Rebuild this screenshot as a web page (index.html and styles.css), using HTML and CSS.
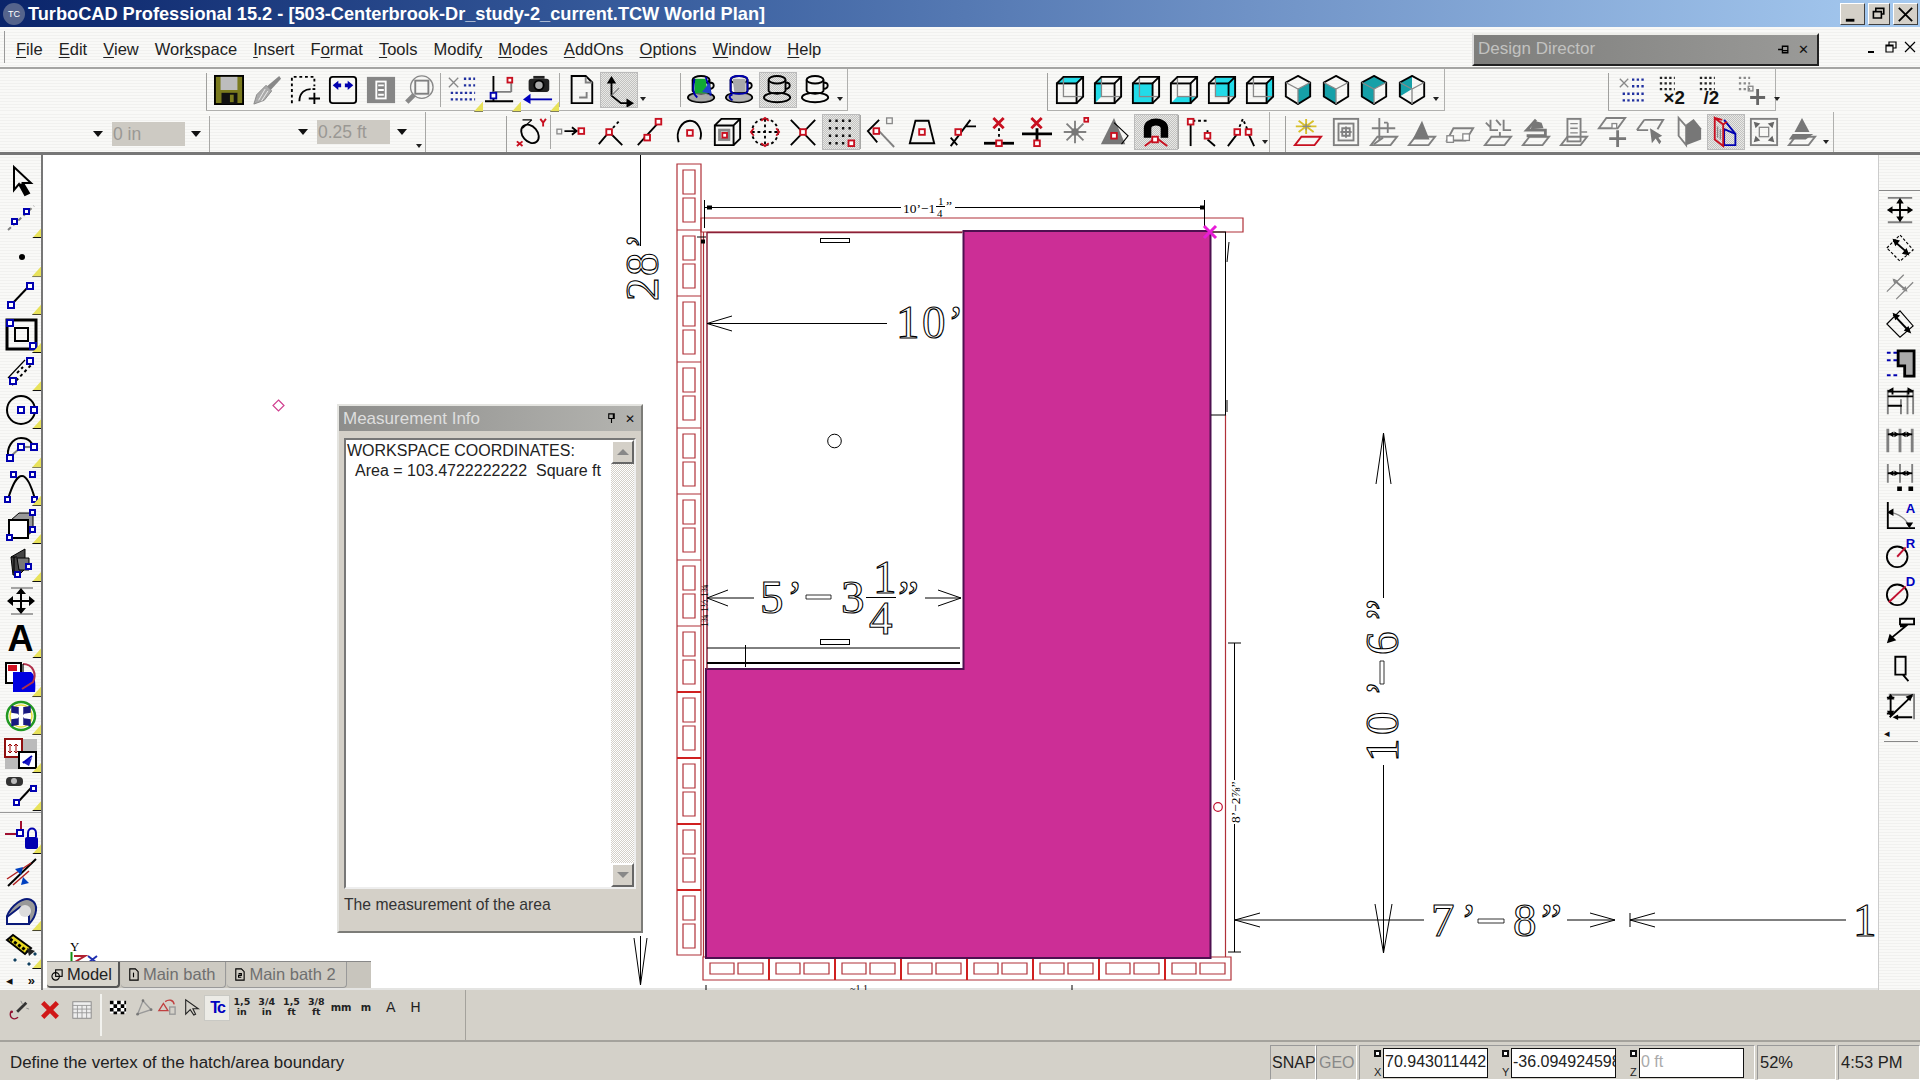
FILE: index.html
```html
<!DOCTYPE html>
<html lang="en">
<head>
<meta charset="utf-8">
<title>TurboCAD Professional 15.2</title>
<link rel="stylesheet" href="styles.css">
</head>
<body>
<svg class="defs" xmlns="http://www.w3.org/2000/svg">
  <symbol id="cube" viewBox="0 0 32 32"><rect class="k" x="2" y="9" width="21" height="21"/><rect class="g1" x="9" y="2" width="21" height="21"/><path class="k" d="M2 9 9 2H30V23L23 30M23 9 30 2"/></symbol>
  <symbol id="iso" viewBox="0 0 32 32"><path class="k" d="M16 1 29 8V23L16 31 3 23V8Z"/><path class="g1" d="M3 8 16 15 29 8M16 15V31"/></symbol>
  <symbol id="plane" viewBox="0 0 32 32"><path class="g" d="M9 21H30L23 30H2Z"/></symbol>
  <symbol id="cup" viewBox="0 0 32 32"><ellipse class="k" cx="15" cy="5" rx="9" ry="4"/><path class="k" d="M6 5V17C8 21 22 21 24 17V5M24 8C30 8 30 14 24 15"/><ellipse class="k" cx="15" cy="24" rx="14" ry="5"/></symbol>
</svg>
<div class="app">
  <header class="titlebar">
    <span class="applogo">TC</span>
    <h1 class="title">TurboCAD Professional 15.2 - [503-Centerbrook-Dr_study-2_current.TCW World Plan]</h1>
    <div class="winbtns">
      <button class="winbtn"><svg viewBox="0 0 20 18"><path class="k sw3" d="M3 15H12"/></svg></button>
      <button class="winbtn narrow"><svg viewBox="0 0 20 18"><path class="k" d="M6 7V3H16V10H12M3 7H13V15H3Z"/></svg></button>
      <button class="winbtn"><svg viewBox="0 0 20 18"><path class="k" d="M3 2 17 16M17 2 3 16"/></svg></button>
    </div>
  </header>

  <nav class="menubar">
    <span class="grip-v"></span>
    <ul class="menu">
      <li><u>F</u>ile</li><li><u>E</u>dit</li><li><u>V</u>iew</li><li>Wor<u>k</u>space</li><li><u>I</u>nsert</li><li>F<u>o</u>rmat</li><li><u>T</u>ools</li><li>Modif<u>y</u></li><li><u>M</u>odes</li><li><u>A</u>ddOns</li><li><u>O</u>ptions</li><li><u>W</u>indow</li><li><u>H</u>elp</li>
    </ul>
    <div class="dd">
      <span class="dd-title">Design Director</span>
      <span class="dd-pin"><svg viewBox="0 0 12 12"><path class="k1" d="M1 6H5M5 3V9H10V3ZM5 7H10"/></svg></span>
      <span class="dd-close">✕</span>
    </div>
    <div class="mdi">
      <svg viewBox="0 0 14 14"><path class="k" d="M3 12H9"/></svg>
      <svg viewBox="0 0 14 14"><path class="k1" d="M5 5V2H12V8H9M2 5H9V12H2ZM2 6H9"/></svg>
      <svg viewBox="0 0 14 14"><path class="k1" d="M2 2 12 12M12 2 2 12"/></svg>
    </div>
  </nav>

  <div class="tbrow row1">
    <div class="tg tg1">
      <span class="grip"></span>
      <span class="ib"><svg viewBox="0 0 32 32"><rect x="1" y="1" width="30" height="30" fill="#7a7a1e" stroke="#000" stroke-width="2"/><rect x="7" y="2" width="18" height="14" fill="#bdbdbd"/><rect x="8" y="19" width="17" height="12" fill="#111"/><rect x="17" y="21" width="4" height="8" fill="#7a7a1e"/></svg></span>
      <span class="ib"><svg viewBox="0 0 32 32"><path d="M29 1 31 4 20 16 16 12Z" fill="#888"/><path d="M15 11 21 17 13 27 2 31 5 21Z" fill="#aaa" stroke="#888"/><path class="w1" d="M7 27 14 15M10 28 17 17"/></svg></span>
      <span class="ib"><svg viewBox="0 0 32 32"><path class="kd" d="M2 30V2H26V12"/><path class="k" d="M10 28C10 18 17 15 22 15"/><path class="kd" d="M24 15H30"/><path class="k" d="M20 25H32M26 19V31"/></svg></span>
      <span class="ib"><svg viewBox="0 0 32 32"><rect class="k" x="2" y="2" width="28" height="28" rx="3"/><path d="M5 11 11 6V9H14V13H11V16ZM27 11 21 6V9H18V13H21V16Z" fill="#0000b0"/></svg></span>
      <span class="ib"><svg viewBox="0 0 32 32"><rect x="1" y="2" width="30" height="28" fill="#868686"/><rect x="11" y="7" width="10" height="18" fill="none" stroke="#fff" stroke-width="2"/><path d="M13 11H19M13 16H19M13 21H19" stroke="#fff" stroke-width="2"/></svg></span>
      <span class="ib"><svg viewBox="0 0 32 32"><circle class="g1" cx="19" cy="13" r="12"/><rect class="g" x="12" y="6" width="14" height="14"/><path d="M11 21 3 29" stroke="#888" stroke-width="5"/></svg></span>
      <span class="vsep"></span>
      <span class="ib fly"><svg viewBox="0 0 32 32"><path class="g1" d="M2 3 12 13M12 3 2 13"/><path class="dot-b" d="M18 4H30M18 11H30M4 19H30M4 26H30"/></svg></span>
      <span class="ib fly"><svg viewBox="0 0 32 32"><path class="k" d="M9 1V28M0 28H30"/><path class="g" d="M9 18H28M28 4V18"/><rect class="rs" x="24" y="3" width="5" height="5"/><rect class="bs" x="6" y="19" width="6" height="6"/></svg></span>
      <span class="ib fly"><svg viewBox="0 0 32 32"><rect x="6" y="4" width="22" height="14" rx="3" fill="#222"/><circle cx="17" cy="11" r="5" fill="#aaa" stroke="#000" stroke-width="2"/><rect x="11" y="1" width="12" height="3" fill="#222"/><path class="b" d="M3 26H31"/><path d="M0 26 8 20V31Z" fill="#0000c0"/></svg></span>
      <span class="vsep"></span>
      <span class="ib"><svg viewBox="0 0 32 32"><path class="k" d="M6 1H21L28 8V30H6Z"/><path class="g" d="M14 24H22V18M21 2V8H28"/></svg></span>
      <span class="ib sel"><svg viewBox="0 0 32 32"><path class="k" d="M8 5V22L18 30H28"/><path d="M8 1 3 9H13ZM24 25 32 30 24 35Z"/><path class="g1" d="M8 22 16 14"/></svg></span>
      <span class="drop"></span>
      <span class="vsep gapl"></span>
      <span class="ib"><svg viewBox="0 0 32 32"><use href="#cup"/><path d="M8 4H20L22 20H8Z" fill="#11aa33"/><ellipse cx="15" cy="24" rx="13" ry="5" fill="#777" opacity=".6"/><path class="b" d="M8 4C6 14 6 20 11 24M20 2C22 10 26 16 25 22"/><path d="M16 18 24 8 26 20Z" fill="#2244cc"/></svg></span>
      <span class="ib"><svg viewBox="0 0 32 32"><use href="#cup"/><path d="M8 4H22L22 18H10Z" fill="#aaa"/><ellipse cx="15" cy="24" rx="13" ry="5" fill="#999" opacity=".7"/><path class="b" d="M6 5V17C6 21 24 21 24 17V5M15 1C8 1 6 3 6 5M24 5C24 3 22 1 15 1M8 27C3 24 5 21 8 21"/></svg></span>
      <span class="ib sel"><svg viewBox="0 0 32 32"><use href="#cup"/></svg></span>
      <span class="ib"><svg viewBox="0 0 32 32"><use href="#cup"/></svg></span>
      <span class="drop"></span>
    </div>
    <div class="tg tg2">
      <span class="grip"></span>
      <span class="ib"><svg viewBox="0 0 32 32"><path class="cy" d="M2 9 9 2H30L23 9Z"/><use href="#cube"/></svg></span>
      <span class="ib"><svg viewBox="0 0 32 32"><path class="cy" d="M2 9 9 2V23L2 30Z"/><use href="#cube"/></svg></span>
      <span class="ib"><svg viewBox="0 0 32 32"><rect class="cy" x="2" y="9" width="21" height="21"/><use href="#cube"/></svg></span>
      <span class="ib"><svg viewBox="0 0 32 32"><path class="cy" d="M2 30 9 23H30L23 30Z"/><use href="#cube"/></svg></span>
      <span class="ib"><svg viewBox="0 0 32 32"><rect class="cy" x="9" y="2" width="21" height="21"/><use href="#cube"/></svg></span>
      <span class="ib"><svg viewBox="0 0 32 32"><path class="cy" d="M23 9 30 2V23L23 30Z"/><use href="#cube"/></svg></span>
      <span class="ib"><svg viewBox="0 0 32 32"><path class="te" d="M16 15 29 8V23L16 31Z"/><use href="#iso"/></svg></span>
      <span class="ib"><svg viewBox="0 0 32 32"><path class="te" d="M3 8 16 15V31L3 23Z"/><use href="#iso"/></svg></span>
      <span class="ib"><svg viewBox="0 0 32 32"><path class="te" d="M16 1 29 8 16 15V31L3 23V8Z"/><use href="#iso"/></svg></span>
      <span class="ib"><svg viewBox="0 0 32 32"><path class="te" d="M3 8 16 1V15L3 23Z"/><use href="#iso"/></svg></span>
      <span class="drop"></span>
    </div>
    <div class="tg tg3">
      <span class="grip"></span>
      <span class="ib w40"><svg viewBox="0 0 32 32"><path class="g1" d="M3 4 12 13M12 4 3 13"/><path class="dot-b" d="M16 5H30M16 12H30M6 20H30M6 27H30"/></svg></span>
      <span class="ib w40"><svg viewBox="0 0 32 32"><path class="dot-b dk" d="M3 3H19M3 9H19M3 15H19"/><text class="ictext" x="7" y="31">×2</text></svg></span>
      <span class="ib w40"><svg viewBox="0 0 32 32"><path class="dot-b dk" d="M3 3H19M3 9H19M3 15H19"/><text class="ictext" x="7" y="31">/2</text></svg></span>
      <span class="ib w40"><svg viewBox="0 0 32 32"><path class="dot-g" d="M2 3H14M2 9H14M2 15H14"/><rect class="g1" x="12" y="12" width="5" height="5"/><path d="M22 15V32M14 24H30" stroke="#666" stroke-width="3"/></svg></span>
      <span class="drop"></span>
    </div>
  </div>

  <div class="tbrow row2">
    <div class="combo">
      <i class="arr"></i><span class="cbox">0 in</span><i class="arr"></i>
    </div>
    <div class="combo c2">
      <i class="arr"></i><span class="cbox">0.25 ft</span><i class="arr"></i>
      <span class="drop"></span>
    </div>
    <div class="tg tg4">
      <span class="grip"></span>
      <span class="ib w40"><svg viewBox="0 0 32 32"><ellipse class="k" cx="16" cy="18" rx="8" ry="11" transform="rotate(-40 16 18)"/><path class="k1" d="M8 3H18M8 12 18 3"/><path class="r" d="M27 2 30 6V10M30 6 33 2"/><path class="r" d="M2 26 8 31M8 26 2 31"/></svg></span>
      <span class="vsep"></span>
      <span class="ib w42"><svg viewBox="0 0 32 32"><rect class="g1" x="1" y="13" width="5" height="5"/><path class="k" d="M9 15H22M17 11 22 15 17 19"/><rect class="rs" x="24" y="12" width="6" height="6"/></svg></span>
      <span class="ib"><svg viewBox="0 0 32 32"><path class="k" d="M3 29 14 16 28 30"/><path class="kd" d="M14 16 26 3"/><rect class="rs" x="11" y="13" width="6" height="6"/></svg></span>
      <span class="ib w40"><svg viewBox="0 0 32 32"><path class="k" d="M3 30 26 5"/><rect class="rs" x="10" y="19" width="6" height="6"/><rect class="rs" x="22" y="2" width="6" height="6"/></svg></span>
      <span class="ib"><svg viewBox="0 0 32 32"><path class="k" d="M5 27C1 15 9 4 17 4S31 14 28 24"/><rect class="rs" x="14" y="14" width="6" height="6"/></svg></span>
      <span class="ib"><svg viewBox="0 0 32 32"><path class="k" d="M3 9H23V30H3ZM3 9 10 2H30V23L23 30M23 9 30 2"/><rect x="8" y="14" width="10" height="10" fill="none" stroke="#888" stroke-width="3"/><rect class="rs" x="11" y="17" width="5" height="5"/></svg></span>
      <span class="ib"><svg viewBox="0 0 32 32"><circle class="kd" cx="16" cy="16" r="14"/><path class="kd" d="M2 16H30M16 2V30"/><path class="r" d="M12 4 16 1 20 4M12 28 16 31 20 28M4 12 1 16 4 20M28 12 31 16 28 20"/></svg></span>
      <span class="ib"><svg viewBox="0 0 32 32"><path class="k" d="M3 3 29 30M29 3 3 30"/><rect class="rs" x="13" y="13" width="6" height="6"/></svg></span>
      <span class="ib sel"><svg viewBox="0 0 32 32"><path class="dot-k" d="M3 4H30M3 12H30M3 20H30M3 28H20"/><rect class="rs" x="24" y="25" width="6" height="6"/></svg></span>
      <span class="vsep"></span>
      <span class="ib w42"><svg viewBox="0 0 32 32"><path class="k" d="M14 3 2 15 12 27"/><path class="g" d="M14 15 30 32"/><rect class="rs" x="8" y="12" width="6" height="6"/><rect class="g1" x="22" y="1" width="6" height="6"/></svg></span>
      <span class="ib w40"><svg viewBox="0 0 32 32"><path class="k" d="M9 4H23L29 28H3Z"/><rect class="rs" x="13" y="13" width="6" height="6"/></svg></span>
      <span class="ib"><svg viewBox="0 0 32 32"><path class="k" d="M5 31 26 3M20 10 H32M5 22 12 30"/><rect class="rs" x="10" y="13" width="6" height="6"/></svg></span>
      <span class="ib"><svg viewBox="0 0 32 32"><path class="r sw3" d="M10 1 21 12M21 1 10 12"/><path class="kd" d="M16 12V24"/><path class="k sw3" d="M0 28H32"/><rect class="rs" x="13" y="25" width="6" height="6"/></svg></span>
      <span class="ib"><svg viewBox="0 0 32 32"><path class="r sw3" d="M10 1 21 12M21 1 10 12"/><path class="k sw3" d="M16 12V26M0 18H32"/><rect class="rs" x="13" y="25" width="6" height="6"/></svg></span>
      <span class="ib"><svg viewBox="0 0 32 32"><path class="g" d="M16 4V28M4 16H28M7 7 25 25M25 7 7 25"/><circle cx="16" cy="16" r="4" fill="#777"/><rect class="rs" x="26" y="1" width="4" height="4"/></svg></span>
      <span class="ib w40"><svg viewBox="0 0 32 32"><path d="M16 1 28 29H2Z" fill="#777"/><path class="k1" d="M16 6 31 20 24 29"/><rect class="rs" x="13" y="17" width="6" height="6"/></svg></span>
      <span class="vsep"></span>
      <span class="ib w44 sel"><svg viewBox="0 0 32 32"><path d="M3 22V12C3 -2 29 -2 29 12V22H21V12C21 8 11 8 11 12V22Z" fill="#000"/><path class="r" d="M4 31 16 22 28 31"/><rect class="rs" x="12" y="21" width="6" height="6"/></svg></span>
      <span class="vsep"></span>
      <span class="ib w44"><svg viewBox="0 0 32 32"><path class="k" d="M6 6V31"/><path class="kd" d="M8 4H24M24 14V20"/><path class="k" d="M24 24 32 31"/><rect class="rs" x="3" y="2" width="6" height="6"/><rect class="rs" x="21" y="17" width="6" height="6"/></svg></span>
      <span class="ib"><svg viewBox="0 0 32 32"><path class="k" d="M2 31 12 18M24 18 30 31"/><path class="kd" d="M12 16 18 2 24 16"/><rect class="rs" x="9" y="13" width="6" height="6"/><rect class="rs" x="21" y="13" width="6" height="6"/></svg></span>
      <span class="drop"></span>
    </div>
    <div class="tg tg5">
      <span class="grip"></span>
      <span class="ib"><svg viewBox="0 0 32 32"><path class="r" d="M9 21H30L23 30H2Z"/><path d="M14 2V18M6 4 22 16M22 4 6 16M3 10H25" stroke="#d8c02a" stroke-width="2"/><path class="g1" d="M14 7V14M10 10H19"/></svg></span>
      <span class="ib"><svg viewBox="0 0 32 32"><rect class="g" x="3" y="2" width="26" height="28"/><rect class="g" x="8" y="7" width="16" height="18"/><path class="g" d="M16 10V22M10 16H22M12 12H20V20H12Z"/></svg></span>
      <span class="ib"><svg viewBox="0 0 32 32"><use href="#plane"/><path class="g" d="M11 1V24M3 12H28M20 6V17M16 6H20M5 29 15 22"/></svg></span>
      <span class="ib"><svg viewBox="0 0 32 32"><use href="#plane"/><path d="M16 4 24 24H6Z" fill="#777"/></svg></span>
      <span class="ib"><svg viewBox="0 0 32 32"><path class="g" d="M9 12H30L22 25H2Z"/><rect class="g1 wf" x="2" y="20" width="7" height="7"/><rect class="g1 wf" x="19" y="18" width="7" height="7"/></svg></span>
      <span class="ib"><svg viewBox="0 0 32 32"><use href="#plane"/><path class="g" d="M8 3V14H16M22 3V14H30M14 3 19 9M18 16V21M3 6 8 11"/></svg></span>
      <span class="ib"><svg viewBox="0 0 32 32"><use href="#plane"/><path d="M16 3 6 14H26V20H6" fill="none" stroke="#777" stroke-width="3"/><path d="M14 4 22 6 24 12 10 13Z" fill="#777"/></svg></span>
      <span class="ib"><svg viewBox="0 0 32 32"><use href="#plane"/><rect class="g" x="9" y="2" width="14" height="24"/><path class="g1" d="M12 7H20M12 12H20M12 17H20M23 16H30"/></svg></span>
      <span class="ib"><svg viewBox="0 0 32 32"><path class="g" d="M10 1H30L22 12H2Z"/><rect class="g1 wf" x="16" y="7" width="5" height="5"/><path d="M22 14V32M13 23H31" stroke="#777" stroke-width="3"/></svg></span>
      <span class="ib"><svg viewBox="0 0 32 32"><path class="g" d="M10 3H30L24 13M2 14 10 3M2 14H14"/><path d="M16 12 18 28 22 23 26 29 28 26 25 22 29 20Z" fill="#777"/></svg></span>
      <span class="ib"><svg viewBox="0 0 32 32"><path class="g" d="M6 1V20L14 30V10Z"/><path d="M14 8 22 2 30 12V24L14 30Z" fill="#777"/></svg></span>
      <span class="ib sel"><svg viewBox="0 0 32 32"><path class="b" d="M14 13 26 18V30H14Z"/><path d="M14 3 26 18" class="b"/><path class="r" d="M4 1V24L13 31V8ZM4 1 12 3M13 8 17 5"/><path class="g1" d="M7 10V22M10 13V24"/></svg></span>
      <span class="ib"><svg viewBox="0 0 32 32"><rect class="g" x="2" y="2" width="28" height="28"/><path d="M5 5 12 7 7 12ZM27 5 20 7 25 12ZM5 27 12 25 7 20ZM27 27 20 25 25 20Z" fill="#666"/><rect class="g1" x="11" y="11" width="10" height="10"/></svg></span>
      <span class="ib"><svg viewBox="0 0 32 32"><path class="g" d="M9 21H30L23 30H2Z"/><path d="M6 18H28L20 24H2Z" fill="#777"/><path d="M16 1 24 16H8Z" fill="#777"/></svg></span>
      <span class="drop"></span>
    </div>
  </div>

  <main class="workarea">
    <aside class="lefttb">
      <span class="tbcap"></span>
      <span class="lb"><svg viewBox="0 0 32 32"><path class="k" d="M9 2V25L14 19 20 30 24 28 18 18H26Z"/><path d="M14 19 20 30 24 28 18 18Z" fill="#000"/></svg></span>
      <span class="lb fly2"><svg viewBox="0 0 32 32"><path class="g dashed" d="M3 27 29 3"/><rect class="bs" x="7" y="16" width="5" height="5"/><rect class="bs" x="19" y="6" width="5" height="5"/></svg></span>
      <span class="lb fly2"><svg viewBox="0 0 32 32"><circle cx="17" cy="16" r="3"/></svg></span>
      <span class="lb fly2"><svg viewBox="0 0 32 32"><path class="k" d="M6 25 25 5"/><rect class="bs" x="3" y="22" width="6" height="6"/><rect class="bs" x="22" y="3" width="6" height="6"/></svg></span>
      <span class="lb fly2"><svg viewBox="0 0 32 32"><rect class="k sw3" x="2" y="2" width="29" height="29"/><rect class="k" x="10" y="10" width="13" height="13"/><rect class="bs" x="2" y="2" width="6" height="6"/><rect class="bs" x="25" y="25" width="6" height="6"/></svg></span>
      <span class="lb fly2"><svg viewBox="0 0 32 32"><path class="k1" d="M3 22 20 4"/><path class="kd" d="M7 29 28 7M12 17 18 11"/><rect class="bs" x="5" y="22" width="6" height="6"/><rect class="bs" x="22" y="2" width="6" height="6"/></svg></span>
      <span class="lb fly2"><svg viewBox="0 0 32 32"><circle class="k" cx="16" cy="16" r="14"/><rect class="bs" x="13" y="13" width="6" height="6"/><rect class="bs" x="26" y="13" width="6" height="6"/></svg></span>
      <span class="lb fly2"><svg viewBox="0 0 32 32"><path class="k" d="M4 27C0 16 8 6 16 6S28 10 29 19"/><path class="g" d="M5 25 16 15H29"/><rect class="bs" x="2" y="23" width="6" height="6"/><rect class="bs" x="13" y="12" width="6" height="6"/><rect class="bs" x="26" y="12" width="6" height="6"/></svg></span>
      <span class="lb fly2"><svg viewBox="0 0 32 32"><path class="k" d="M3 28C8 12 12 5 17 5S26 14 30 28"/><rect class="bs" x="6" y="1" width="5" height="5"/><rect class="bs" x="25" y="1" width="5" height="5"/><rect class="bs" x="0" y="26" width="5" height="5"/><rect class="bs" x="27" y="26" width="5" height="5"/></svg></span>
      <span class="lb fly2"><svg viewBox="0 0 32 32"><path d="M6 11 14 4H28V22L23 26V11Z" fill="#999" stroke="#000"/><rect x="4" y="11" width="19" height="18" fill="#fff" stroke="#000" stroke-width="2"/><rect class="bs" x="25" y="1" width="5" height="5"/><rect class="bs" x="25" y="18" width="5" height="5"/><rect class="bs" x="2" y="26" width="5" height="5"/></svg></span>
      <span class="lb fly2"><svg viewBox="0 0 32 32"><path d="M6 10 20 2V22L14 28H8Z" fill="#444" stroke="#000"/><path d="M12 11H24V23H14Z" fill="#777" stroke="#000"/><path class="k1" d="M6 10H12M9 10V26"/><rect class="bs" x="21" y="17" width="5" height="5"/><rect class="bs" x="10" y="25" width="5" height="5"/></svg></span>
      <span class="lb mv"><svg viewBox="0 0 32 32"><path class="g1" d="M6 3H28M6 29H28"/><path class="k" d="M16 5V27M4 16H28"/><path d="M16 3 11 9H21ZM16 29 11 23H21ZM2 16 8 11V21ZM30 16 24 11V21Z"/></svg></span>
      <span class="lb fly2 lb-a">A</span>
      <span class="lb fly2"><svg viewBox="0 0 32 32"><rect x="1" y="1" width="15" height="20" fill="#fff" stroke="#000" stroke-width="2"/><rect x="3" y="3" width="9" height="6" fill="#d01020"/><path d="M8 10H26C32 14 30 30 30 30H8Z" fill="#0000e0"/><path d="M18 2C28 2 32 12 28 20L17 27" fill="none" stroke="#b0304a" stroke-width="2"/><path d="M18 2V10" class="k1"/></svg></span>
      <span class="lb fly2"><svg viewBox="0 0 32 32"><circle cx="16" cy="16" r="14" fill="#fff" stroke="#229922" stroke-width="2.5"/><circle cx="16" cy="16" r="11" fill="none" stroke="#e8e040" stroke-width="1.5"/><path d="M7 6 13 13V7M7 6V12L13 13M25 6 19 13V7M25 6V12L19 13M7 26 13 19V25M7 26V20L13 19M25 26 19 19V25M25 26V20L19 19" fill="#1a1a80" stroke="#1a1a80" stroke-width="1.5"/></svg></span>
      <span class="lb fly2"><svg viewBox="0 0 32 32"><rect x="0" y="1" width="32" height="30" fill="#bbb"/><rect x="0" y="1" width="17" height="18" fill="#fff" stroke="#901010" stroke-width="2"/><path d="M5 6V15M3 13 5 15 7 13M3 8 5 6 7 8M11 6V15M9 13 11 15 13 13M9 8 11 6 13 8" stroke="#900" fill="none"/><rect x="14" y="14" width="17" height="16" fill="#fff" stroke="#000" stroke-width="2"/><path class="b" d="M27 18 18 25"/><path d="M24 28 27 20 17 24Z" fill="#0000c0" opacity=".9"/></svg></span>
      <span class="lb fly2"><svg viewBox="0 0 32 32"><rect x="1" y="1" width="17" height="9" rx="4" fill="#333"/><circle cx="9" cy="5" r="3" fill="#bbb"/><path class="k" d="M13 26 26 12"/><rect class="bs" x="9" y="24" width="5" height="5"/><rect class="bs" x="26" y="10" width="5" height="5"/></svg></span>
      <span class="lb-div"></span>
      <span class="lb fly2"><svg viewBox="0 0 32 32"><path d="M0 15H11M16 2V10" stroke="#a01030" stroke-width="2"/><rect class="bs" x="12" y="11" width="6" height="6"/><path d="M23 18V14C23 8 31 8 31 14V18" fill="none" stroke="#0000b0" stroke-width="2"/><rect x="20" y="18" width="13" height="12" rx="2" fill="#0000b0"/></svg></span>
      <span class="lb"><svg viewBox="0 0 32 32"><path class="k" d="M3 29 31 2"/><path d="M2 22 26 6M8 28 24 14" stroke="#b02020" stroke-width="1.5"/><path d="M10 12 16 18 18 10ZM24 26 18 20 16 28Z" fill="#0040c0"/></svg></span>
      <span class="lb fly2"><svg viewBox="0 0 32 32"><path d="M2 20C6 10 18 0 26 4S32 20 24 28H2Z" fill="#999" stroke="#0a1a7a" stroke-width="2"/><path d="M2 21 15 11 24 20V28H2Z" fill="#fff" stroke="#0a1a7a" stroke-width="2"/><circle cx="20" cy="15" r="6" fill="#ddd"/></svg></span>
      <span class="lb fly2"><svg viewBox="0 0 32 32"><path d="M2 6 8 1 26 14 20 20Z" fill="#e8d820" stroke="#000" stroke-width="2"/><path d="M5 5 22 17" stroke="#000" stroke-width="3" stroke-dasharray="3 2"/><path d="M22 14 30 17 24 22Z" fill="#222"/><path d="M30 18 32 20 30 22 28 20ZM10 24 12 26 10 28 8 26ZM24 28 26 30 24 32 22 30Z" fill="#104060"/></svg></span>
      <span class="lb-foot"><i>◂</i><b>»</b></span>
    </aside>

    <section class="canvas">
      <svg class="drawing" viewBox="43 155 1835 835" xmlns="http://www.w3.org/2000/svg">
        <g class="brick">
          <path d="M677 164h24v66h-24zM677 230h24v66h-24zM677 296h24v66h-24zM677 362h24v66h-24zM677 428h24v66h-24zM677 494h24v66h-24zM677 560h24v66h-24zM677 626h24v66h-24zM677 692h24v66h-24zM677 758h24v66h-24zM677 824h24v66h-24zM677 890h24v65h-24z"/>
          <path d="M683 170h12v24h-12zM683 198h12v24h-12zM683 236h12v24h-12zM683 264h12v24h-12zM683 302h12v24h-12zM683 330h12v24h-12zM683 368h12v24h-12zM683 396h12v24h-12zM683 434h12v24h-12zM683 462h12v24h-12zM683 500h12v24h-12zM683 528h12v24h-12zM683 566h12v24h-12zM683 594h12v24h-12zM683 632h12v24h-12zM683 660h12v24h-12zM683 698h12v24h-12zM683 726h12v24h-12zM683 764h12v24h-12zM683 792h12v24h-12zM683 830h12v24h-12zM683 858h12v24h-12zM683 896h12v24h-12zM683 924h12v24h-12z"/>
          <path d="M703 957h528v23h-528z"/>
          <path d="M710 963h24v11h-24zM738 963h25v11h-25zM776 963h24v11h-24zM804 963h25v11h-25zM842 963h24v11h-24zM870 963h25v11h-25zM908 963h24v11h-24zM936 963h25v11h-25zM974 963h24v11h-24zM1002 963h25v11h-25zM1040 963h24v11h-24zM1068 963h25v11h-25zM1106 963h24v11h-24zM1134 963h25v11h-25zM1172 963h24v11h-24zM1200 963h25v11h-25z"/>
          <path class="brick2" d="M769 957v23M835 957v23M901 957v23M967 957v23M1033 957v23M1099 957v23M1165 957v23M677 692h24M677 758h24M677 824h24M677 890h24"/>
          <path d="M701 218h542v14h-542z"/>
          <path d="M1225.5 415V957"/>
          <path d="M703.5 232V957"/>
        </g>
        <path class="magenta" d="M706 669H963.5V231H1210.5V958H706Z"/>
        <path class="wall" d="M707 232.500H962M707 232V669"/>
        <path class="line" d="M1211 232H1226M1225.5 232V415M1211 415H1226M707 648H960"/>
        <path class="line lw2" d="M707 663H960"/>
        <path class="line" d="M704.5 207.5H901M955 207.5H1204.5M704.5 200V228M1204.5 200V226"/>
        <path class="arrowfill" d="M707 207.5h5M1200 207.5h5M701 241.5h4"/>
        <rect class="thin" x="820.5" y="238.5" width="29" height="4"/>
        <rect class="thin" x="820.5" y="639.5" width="29" height="5"/>
        <circle class="thin" cx="834.5" cy="441" r="6.8"/>
        <path class="line" d="M745.5 645V667"/>

        <text class="smalld" x="903" y="213">10’−1</text>
        <text class="fracd" x="938" y="205">1</text><path class="line" d="M936 206.5h9"/><text class="fracd" x="937" y="217">4</text><text class="smalld" x="946" y="210">”</text>

        <path class="line" d="M707 323.5H887M707 323.5 732 316M707 323.5 732 331M697 237H706"/>
        <text class="bigd" x="896 922 948" y="338">10’</text>

        <path class="line" d="M707 598H754M707 598 728 590M707 598 728 606M925 598H961M961 598 938 590M961 598 938 606"/>
        <text class="bigd" x="760 787 841" y="613">5’3</text>
        <path class="minus" d="M806 595h25v4h-25z"/>
        <text class="bigd" x="873" y="593">1</text>
        <path class="line" d="M866 597.5H896"/>
        <text class="bigd" x="869" y="634">4</text>
        <text class="bigd" x="898" y="613">”</text>

        <path class="line" d="M640.5 155V246M640.5 936V985M640.5 985 634 938M640.5 985 647 938"/>
        <text class="bigd" transform="translate(658 301) rotate(-90)" x="0 25 52" y="0">28’</text>

        <path class="line" d="M1383.5 433V598M1383.5 765V953M1383.5 433 1376 484M1383.5 433 1391 484M1383.5 953 1375 904M1383.5 953 1392 904"/>
        <text class="bigd" transform="translate(1398 762) rotate(-90)" x="0 27 66 107 142" y="0">10’6”</text>
        <path class="minus" d="M1380 661h4v23h-4z"/>

        <path class="line" d="M1235 920H1424M1235 920 1260 913M1235 920 1260 927M1567 920H1615M1615 920 1590 913M1615 920 1590 927M1630 920H1846M1630 920 1655 913M1630 920 1655 927M1630 913V927"/>
        <text class="bigd" x="1431 1461 1513 1541" y="936">7’8”</text>
        <path class="minus" d="M1478 919h26v4h-26z"/>
        <text class="bigd" x="1853" y="936">1</text>

        <path class="line" d="M1234.5 643V780M1234.5 824V952M1228 643H1241M1228 952H1241"/>
        <text class="smalld" transform="translate(1240 823) rotate(-90)" x="0" y="0">8’−2⅞”</text>
        <circle class="redc" cx="1218" cy="807" r="4.3"/>

        <path class="mx" d="M1204 226 1216 238M1216 226 1204 238"/>
        <path class="diam" d="M278.500 400 284 405.500 278.500 411 273 405.500Z"/>

        <text class="tinyd" transform="translate(708 627) rotate(-90)" x="0" y="0">1¾ 1½ 1¾</text>
        <path class="line" d="M1229 242 1227 262M1227 400V412"/>
        <path class="line" d="M706 985V990M1072 985V990"/>
        <text class="tinyd" x="850" y="992">~1 1</text>

        <path class="ax-g" d="M71.500 952V968"/>
        <path class="ax-r" d="M74 956H85L75 962H85"/>
        <path class="ax-b" d="M88 956 97 963M97 956 88 963"/>
        <text class="tinyd ynote" x="70" y="951">Y</text>
      </svg>

      <div class="panel">
        <div class="panel-title">
          <span>Measurement Info</span>
          <span class="panel-pin"><svg viewBox="0 0 12 12"><path class="k1" d="M6 11V6M3 1H9V6H3ZM8 1V6"/></svg></span>
          <span class="panel-close">✕</span>
        </div>
        <div class="panel-body">
          <div class="listbox">
            <div class="listtext">
              <div>WORKSPACE COORDINATES:</div>
              <div class="indent">Area = 103.4722222222&nbsp; Square ft</div>
            </div>
            <div class="scroll">
              <span class="sb-btn"><i class="up"></i></span>
              <span class="sb-track"></span>
              <span class="sb-btn"><i class="down"></i></span>
            </div>
          </div>
          <p class="panel-note">The measurement of the area</p>
        </div>
      </div>

      <div class="tabs">
        <span class="tab active"><svg viewBox="0 0 14 14"><circle class="k1" cx="5" cy="9" r="4"/><rect class="k1" x="5" y="2" width="7" height="7"/></svg>Model</span>
        <span class="tab"><svg viewBox="0 0 14 14"><path class="k1" d="M3 1H9L12 4V13H3Z"/><path class="k1" d="M7 5V10"/></svg>Main bath</span>
        <span class="tab"><svg viewBox="0 0 14 14"><path class="k1" d="M3 1H9L12 4V13H3Z"/><path class="k1" d="M6 6H9V8H6V10H9"/></svg>Main bath 2</span>
      </div>
    </section>

    <aside class="righttb">
      <span class="rtop"></span>
      <span class="rb"><svg viewBox="0 0 32 32"><path class="g" d="M3 3H29M3 29H29"/><path class="k" d="M16 5V27M5 16H27"/><path d="M16 3 12 9H20ZM16 29 12 23H20ZM2 16 8 12V20ZM30 16 24 12V20Z"/></svg></span>
      <span class="rb"><svg viewBox="0 0 32 32"><path class="k1 thin-dash" d="M2 16 16 2 30 18 16 30Z"/><path class="k" d="M9 8 25 22"/><path d="M8 6 16 8 11 14ZM26 24 18 22 23 16Z"/></svg></span>
      <span class="rb"><svg viewBox="0 0 32 32"><path class="g1" d="M2 22 20 4M12 30 30 12"/><path class="g" d="M9 9 23 21"/><path d="M8 8 14 10 10 14ZM24 22 18 20 22 16Z" fill="#888"/></svg></span>
      <span class="rb"><svg viewBox="0 0 32 32"><path class="k1" d="M2 16 16 2 30 18 16 30Z"/><path class="k" d="M9 6 26 24"/><path d="M8 4 16 7 11 12ZM28 26 20 23 25 18Z"/></svg></span>
      <span class="rb"><svg viewBox="0 0 32 32"><path class="b dashed" d="M2 5H14M2 13H14M2 29H14"/><path d="M14 3H31V30H21V19H14Z" fill="#aaa" stroke="#000" stroke-width="3"/></svg></span>
      <span class="rb"><svg viewBox="0 0 32 32"><path class="g" d="M3 4V30M30 4V30M17 14V30M24 4V30"/><path class="k" d="M3 6H30M3 11H30M3 21H18M3 6 8 3V9M30 6 25 3V9"/></svg></span>
      <span class="rb"><svg viewBox="0 0 32 32"><path class="g sw3" d="M3 5V30M16 5V30M29 5V30"/><path class="k" d="M3 11H29"/><path d="M4 11 9 8V14ZM15 11 10 8V14ZM17 11 22 8V14ZM28 11 23 8V14Z"/></svg></span>
      <span class="rb"><svg viewBox="0 0 32 32"><path class="g" d="M3 2V22M16 2V22M29 2V22"/><path class="k" d="M3 12H29"/><path d="M4 12 9 9V15ZM15 12 10 9V15ZM17 12 22 9V15ZM28 12 23 9V15ZM13 26h5v5h-5zM25 26h5v5h-5z"/></svg></span>
      <span class="rb"><svg viewBox="0 0 32 32"><path class="k" d="M3 2V30H32"/><path class="g1" d="M3 13C14 14 24 20 26 30"/><path d="M2 13 9 9 9 17ZM26 30 22 24H30Z"/><text class="ichl" x="22" y="14">A</text></svg></span>
      <span class="rb"><svg viewBox="0 0 32 32"><circle class="k" cx="13" cy="20" r="11"/><path d="M13 20 22 10" stroke="#c01030" stroke-width="2"/><text class="ichl" x="22" y="11">R</text></svg></span>
      <span class="rb"><svg viewBox="0 0 32 32"><circle class="k" cx="13" cy="20" r="11"/><path d="M4 28 22 11" stroke="#c01030" stroke-width="2"/><text class="ichl" x="22" y="11">D</text></svg></span>
      <span class="rb"><svg viewBox="0 0 32 32"><path class="k" d="M16 4H31V10H16ZM5 26 22 12H16"/><path d="M2 30 5 20 12 27Z"/></svg></span>
      <span class="rb"><svg viewBox="0 0 32 32"><path class="k" d="M11 4H22V23H11ZM19 23 25 30"/></svg></span>
      <span class="rb"><svg viewBox="0 0 32 32"><path class="g" d="M4 4H31V30"/><path class="k" d="M5 28 29 5M2 7H10M6 7V24M2 24H10M12 28H29"/><path d="M6 3 2 9H10ZM6 27 2 21H10ZM8 28 14 25V31ZM30 3 22 6 27 11Z"/></svg></span>
      <span class="rfoot">◂</span>
    </aside>
  </main>

  <div class="bottomtb">
    <span class="bi"><svg viewBox="0 0 24 24"><path d="M3 14C1 20 6 24 11 20" fill="none" stroke="#901030" stroke-width="1.5"/><path d="M10 14 20 4" stroke="#333" stroke-width="3"/><path d="M14 2 16 6M20 10 23 11" stroke="#888"/><circle cx="4" cy="14" r="1.500" fill="#901030"/></svg></span>
    <span class="bi"><svg viewBox="0 0 24 24"><path d="M4 4 20 20M20 4 4 20" stroke="#d01818" stroke-width="5"/></svg></span>
    <span class="bi"><svg viewBox="0 0 24 24"><rect x="2" y="3" width="20" height="18" fill="#eee" stroke="#888"/><path d="M2 7H22M2 11H22M2 15H22M7 7V21M12 7V21M17 7V21" stroke="#999"/></svg></span>
    <span class="bsep"></span>
    <span class="bi s2"><svg viewBox="0 0 20 20"><path d="M1 3H19V17H1Z" fill="#fff"/><path d="M1 3H5V7H1ZM9 3H13V7H9ZM5 7H9V11H5ZM13 7H17V11H13ZM1 11H5V15H1ZM9 11H13V15H9ZM17 3H19V7H17ZM17 11H19V15H17ZM5 15H9V18H5ZM13 15H17V18H13Z" fill="#000"/></svg></span>
    <span class="bi s2"><svg viewBox="0 0 20 20"><path d="M4 18 10 3 19 13Z" fill="none" stroke="#999" stroke-width="1.500"/><circle cx="10" cy="3" r="1.500" fill="#777"/><circle cx="4" cy="18" r="1.500" fill="#777"/><circle cx="19" cy="13" r="1.500" fill="#777"/></svg></span>
    <span class="bi s2"><svg viewBox="0 0 20 20"><path d="M1 14 6 6 11 14Z" fill="none" stroke="#c04040" stroke-width="1.500"/><rect x="13" y="10" width="6" height="8" fill="none" stroke="#999" stroke-width="1.500"/><path d="M8 4C12 1 17 2 18 7" fill="none" stroke="#c04040" stroke-width="1.500"/></svg></span>
    <span class="bi s2"><svg viewBox="0 0 20 20"><path d="M3 2V18L8 13 12 19 14 18 11 12H17Z" fill="none" stroke="#222" stroke-width="1.200"/></svg></span>
    <span class="bi s2 bsel"><span class="tcico">Tc</span></span>
    <span class="bi s2 frac"><span>1,5</span><span>in</span></span>
    <span class="bi s2 frac"><span>3/4</span><span>in</span></span>
    <span class="bi s2 frac"><span>1,5</span><span>ft</span></span>
    <span class="bi s2 frac"><span>3/8</span><span>ft</span></span>
    <span class="bi s2 unit">mm</span>
    <span class="bi s2 unit">m</span>
    <span class="bi s2 lett">A</span>
    <span class="bi s2 lett">H</span>
    <span class="bdiv"></span>
  </div>

  <footer class="statusbar">
    <span class="statustext">Define the vertex of the hatch/area boundary</span>
    <div class="pane snap">SNAP</div>
    <div class="pane geo">GEO</div>
    <div class="pane coords">
      <i class="mini"></i><em>X</em><span class="cinp">70.943011442</span>
      <i class="mini"></i><em>Y</em><span class="cinp">-36.094924598</span>
      <i class="mini"></i><em>Z</em><span class="cinp off">0 ft</span>
    </div>
    <div class="pane zoom">52%</div>
    <div class="pane time">4:53 PM</div>
  </footer>
</div>
</body>
</html>
```

FILE: styles.css
```css
*{box-sizing:border-box}
html,body{margin:0;padding:0;height:100%;overflow:hidden}
body{font-family:"Liberation Sans",Arial,sans-serif;color:#111}
.defs{display:none}
.app{width:1920px;height:1080px;display:flex;flex-direction:column;background:#f6f6f4}
svg{display:block;overflow:visible}

/* shared icon strokes */
.k{fill:none;stroke:#000;stroke-width:2}
.k1{fill:none;stroke:#000;stroke-width:1.2}
.kd{fill:none;stroke:#000;stroke-width:2;stroke-dasharray:3 3}
.g{fill:none;stroke:#808080;stroke-width:2}
.g1{fill:none;stroke:#888;stroke-width:1.4}
.w1{fill:none;stroke:#eee;stroke-width:1}
.wf{fill:#fff}
.r{fill:none;stroke:#c81020;stroke-width:2}
.b{fill:none;stroke:#0000b0;stroke-width:2}
.sw3{stroke-width:3}
.dashed{stroke-dasharray:4 3}
.thin-dash{stroke-dasharray:3 2}
.rs{fill:#fff;stroke:#c81020;stroke-width:2}
.bs{fill:#fff;stroke:#0000b0;stroke-width:2}
.cy{fill:#22dbe8}
.te{fill:#16a0a8}
.dot-b{fill:none;stroke:#2030a0;stroke-width:2.5;stroke-dasharray:2.500 2.500}
.dot-b.dk{stroke:#222}
.dot-g{fill:none;stroke:#888;stroke-width:2.500;stroke-dasharray:2.500 2.500}
.dot-k{fill:none;stroke:#111;stroke-width:2.500;stroke-dasharray:2.500 4.500}
.ictext{font:700 20px "Liberation Sans",sans-serif;fill:#111}
.ichl{font:700 14px "Liberation Sans",sans-serif;fill:#0000c0}

/* title bar */
.titlebar{height:27px;flex:none;display:flex;align-items:center;background:linear-gradient(90deg,#0a246a 0,#3a5f9f 35%,#6f92c6 65%,#a6caf0 100%)}
.applogo{width:22px;height:22px;margin-left:3px;border-radius:50%;background:#55648c;color:#fff;font-size:9px;line-height:22px;text-align:center;flex:none}
.title{margin:1px 0 0 3px;font-size:18.200px;font-weight:700;color:#fff;white-space:nowrap;flex:1}
.winbtns{display:flex;gap:3px;margin-right:2px}
.winbtn{width:25px;height:22px;padding:2px;background:#d4d0c8;border:1px solid;border-color:#fff #404040 #404040 #fff}
.winbtn.narrow{width:22px}

/* menu bar */
.menubar{height:42px;flex:none;display:flex;align-items:center;border-bottom:2px solid #a5a5a3;background:repeating-linear-gradient(#f9f9f7 0 2px,#f1f1ef 2px 3px)}
.grip-v{width:1px;height:32px;margin-left:4px;background:#999;flex:none}
.menu{display:flex;list-style:none;margin:4px 0 0 11px;padding:0;font-size:16.500px;gap:16.100px;color:#222;white-space:nowrap}
.menu u{text-underline-offset:2px}
.dd{margin:4px 0 0 auto;width:347px;height:33px;display:flex;align-items:center;background:linear-gradient(90deg,#7e7e7c,#9a9a98);border:2px solid;border-color:#eeeeea #222 #222 #ddd;padding:0 8px 0 4px}
.dd-title{flex:1;color:#c2c2c0;font-size:17px}
.dd-pin{width:13px;height:13px;margin-right:8px}
.dd-close{font-size:13px;color:#111}
.mdi{width:101px;height:18px;margin-top:4px;display:flex;justify-content:flex-end;gap:5px;padding-right:3px}
.mdi svg{width:14px;height:14px}

/* toolbars */
.tbrow{display:flex;flex:none;background:repeating-linear-gradient(#f9f9f7 0 2px,#f1f1ef 2px 3px)}
.row1{height:43px}
.row2{height:43px;position:relative;border-bottom:3px solid #777;margin-left:0}
.tg{display:flex;align-items:center;height:42px;border-bottom:1px solid #b0b0ae;border-right:1px solid #b0b0ae;position:relative}
.tg1{margin-left:206px;width:642px}
.tg2{margin-left:199px;width:398px}
.tg3{margin-left:163px;width:168px}
.tg4{margin-left:80px;width:764px;height:40px;border:0;border-right:1px solid #b0b0ae}
.tg5{margin-left:15px;width:549px;height:40px;border:0;border-right:1px solid #b0b0ae}
.grip{width:1px;align-self:stretch;margin:4px 3px 0 0;background:#a0a09e;flex:none}
.ib{width:38px;height:36px;display:flex;align-items:center;justify-content:center;flex:none;position:relative}
.ib svg{width:30px;height:30px}
.w40{width:40px}.w42{width:42px}.w44{width:44px}
.sel{background:#d9d9d6 conic-gradient(#c2c2c0 25%,#e8e8e6 0 50%,#c2c2c0 0 75%,#e8e8e6 0) 0 0/2px 2px;outline:1px solid #bbb;outline-offset:-1px}
.vsep{width:1px;height:34px;background:#a8a8a6;margin:0 2px;flex:none}
.row2 .vsep{margin:0 -.5px}
.gapl{margin-left:34px}
.drop{width:0;height:0;border:3.500px solid transparent;border-top:4px solid #222;margin:22px 0 0 2px;flex:none}
.fly::after,.fly2::after{content:"";position:absolute;right:0;bottom:0;width:9px;height:9px;background:#e8e25a;clip-path:polygon(100% 0,100% 100%,0 100%);border-bottom:1px solid #111}
.fly::after{right:-2px;bottom:-4px}

/* combos */
.combo{width:210px;height:36px;display:flex;align-items:center;border-right:1px solid #a8a8a6;padding-left:93px;flex:none;margin-top:4px;position:relative}
.combo.c2{width:216px;padding-left:88px;border-right:1px solid #a8a8a6;height:40px;margin-top:0}
.arr{width:0;height:0;border:5px solid transparent;border-top:6px solid #111;margin-top:5px;flex:none}
.cbox{width:73px;height:24px;background:#cdcac3;color:#9a9894;font-size:17.500px;line-height:24px;padding-left:1px;margin:0 6px 0 9px;flex:none}
.c2 .cbox{margin-right:7px}
.c2 .drop{position:absolute;right:3px;bottom:1px;margin:0}

/* working area */
.workarea{flex:1;display:flex;min-height:0}
.lefttb{width:43px;flex:none;display:flex;flex-direction:column;border-right:2px solid #777;background:repeating-linear-gradient(#f9f9f7 0 2px,#f1f1ef 2px 3px);position:relative}
.tbcap{height:7px;flex:none;border-bottom:0}
.lb{height:38.200px;flex:none;display:flex;align-items:center;justify-content:center;position:relative;width:41px}
.lb svg{width:32px;height:32px}
.fly2::after{right:0;bottom:0}
.lb-a{font:700 36px "Liberation Sans",sans-serif;color:#000;line-height:38px}
.lb-div{height:1px;background:#999;flex:none;margin:1px 0 3px}
.lb-foot{margin-top:auto;display:flex;justify-content:space-between;padding:0 6px 2px 6px;font-size:13px;height:16px;line-height:14px}
.lb-foot i{font-style:normal}
.canvas{flex:1;position:relative;background:#fff;border-bottom:2px solid #e4e4e2;min-width:0}
.drawing{width:1835px;height:835px}
.righttb{width:42px;flex:none;display:flex;flex-direction:column;align-items:center;background:repeating-linear-gradient(#f9f9f7 0 2px,#f1f1ef 2px 3px);border-left:1px solid #ccc}
.rtop{height:36px;width:100%;border-bottom:1px solid #888;flex:none}
.rb{width:32px;height:38.150px;flex:none;display:flex;align-items:center}
.rb svg{width:30px;height:30px;margin:auto}
.rfoot{align-self:flex-start;margin-left:5px;font-size:11px;border-bottom:1px solid #888;width:34px;padding-bottom:1px;margin-top:2px}

/* drawing */
.brick path{fill:none;stroke:#b03038;stroke-width:1.200}
.brick .brick2{stroke:#d02020;stroke-width:2}
.magenta{fill:#cc2e96;stroke:#4e1050;stroke-width:2}
.wall{fill:none;stroke:#8a2038;stroke-width:1.500}
.line{fill:none;stroke:#000;stroke-width:1}
.lw2{stroke-width:2}
.arrowfill{fill:none;stroke:#000;stroke-width:4}
.thin{fill:#fff;stroke:#000;stroke-width:1}
.minus{fill:#fff;stroke:#000;stroke-width:.8}
.bigd{font:400 47px "Liberation Serif",serif;fill:#fff;stroke:#000;stroke-width:1.100}
.smalld{font:400 13.500px "Liberation Serif",serif;fill:#000}
.fracd{font:400 11px "Liberation Serif",serif;fill:#000}
.tinyd{font:400 10px "Liberation Serif",serif;fill:#000}
.ynote{font-size:13px}
.redc{fill:none;stroke:#c01030;stroke-width:1.200}
.mx{fill:none;stroke:#e81cd8;stroke-width:3}
.diam{fill:none;stroke:#d04090;stroke-width:1.200}
.ax-g{stroke:#129012;stroke-width:2}
.ax-r{fill:none;stroke:#b02030;stroke-width:2}
.ax-b{stroke:#2030b0;stroke-width:2}

/* floating panel */
.panel{position:absolute;left:294px;top:249px;width:306px;height:529px;background:#d4d0c8;border:2px solid;border-color:#e4e4e0 #7c7c78 #7c7c78 #e4e4e0;display:flex;flex-direction:column}
.panel-title{height:25px;flex:none;display:flex;align-items:center;padding:0 6px 0 4px;background:linear-gradient(90deg,#8d8d8b,#b4b4b0);color:#dedede;font-size:17px}
.panel-title span:first-child{flex:1}
.panel-pin{width:11px;height:11px;margin-right:8px}
.panel-close{font-size:12px;color:#111}
.panel-body{flex:1;display:flex;flex-direction:column;padding:7px 5px 0 5px;min-height:0}
.listbox{height:451px;flex:none;display:flex;background:#fff;border:2px solid;border-color:#777 #eee #eee #777}
.listtext{flex:1;font-size:16px;line-height:20px;padding:1px 0 0 1px;color:#222;white-space:nowrap}
.indent{padding-left:8px}
.scroll{width:23px;flex:none;display:flex;flex-direction:column;background:conic-gradient(#fff 25%,#d4d0c8 0 50%,#fff 0 75%,#d4d0c8 0) 0 0/2px 2px}
.sb-btn{height:24px;flex:none;background:#d4d0c8;border:2px solid;border-color:#fff #666 #666 #fff;display:flex;align-items:center;justify-content:center}
.sb-track{flex:1}
.up{border:6px solid transparent;border-bottom:6px solid #888;border-top:0}
.down{border:6px solid transparent;border-top:6px solid #888;border-bottom:0}
.panel-note{margin:7px 0 0;font-size:15.700px;color:#333;padding-left:0}

/* tabs */
.tabs{position:absolute;left:4px;bottom:0;width:324px;height:27px;display:flex;gap:1px;background:#c8c5bd;border-top:1px solid #888}
.tab{display:flex;align-items:center;gap:3px;padding:0 10px 0 6px;background:#cdcac2;border-right:1px solid #999;border-bottom:1px solid #999;color:#6f6f6f;font-size:16.500px;border-radius:0 0 4px 4px}
.tab svg{width:13px;height:13px;flex:none}
.tab.active{background:#d8d5cd;color:#222;border-right:2px solid #555;border-bottom:2px solid #555;padding:0 6px 0 4px}

/* bottom toolbar */
.bottomtb{height:52px;flex:none;display:flex;align-items:flex-start;background:#d4d1c9;border-bottom:2px solid #a4a29c;padding:6px 0 0 3px;position:relative}
.bi{width:31.500px;height:28px;display:flex;align-items:center;justify-content:center;flex:none}
.bi svg{width:22px;height:22px}
.bsep{width:2px;height:42px;background:#f2f2ee;margin:-2px 4px 0 2px;flex:none}
.bi.s2{width:24.800px;height:22px}
.s2 svg{width:18px;height:18px}
.bsel{background:#ecebe6;height:24px!important;outline:1px solid #c9c9c4}
.tcico{font:700 16px "Liberation Sans",sans-serif;color:#0000c0;letter-spacing:-2px}
.frac{flex-direction:column;font:700 9.500px/10px "DejaVu Sans",sans-serif;color:#222}
.unit{font:700 10px "DejaVu Sans",sans-serif;color:#222}
.lett{font:400 14px "DejaVu Sans",sans-serif;color:#222}
.bdiv{position:absolute;left:465px;top:0;width:1px;height:50px;background:#a4a29c}

/* status bar */
.statusbar{height:38px;flex:none;display:flex;align-items:stretch;background:#d4d1c9;font-size:16px;color:#222;padding-top:3px}
.statustext{width:1270px;padding:8px 0 0 10px;flex:none;font-size:16.900px}
.pane{border:1px solid;border-color:#999 #fff #fff #999;height:100%;display:flex;align-items:center;padding-left:2px;margin-right:2px;flex:none}
.snap{width:46px;margin-right:0;padding-left:1px}
.geo{width:41px;color:#888}
.coords{width:396px;padding-left:14px;position:relative;gap:0}
.mini{width:7px;height:7px;border:2px solid #111;background:#fff;align-self:flex-start;margin-top:4px;flex:none}
.coords em{font:normal 11px "Liberation Sans",sans-serif;align-self:flex-end;margin:0 1px 0 -7px;width:8px;flex:none;padding-bottom:1px}
.cinp{width:105px;height:30px;background:#fff;border:1px solid #111;font-size:16px;line-height:26px;overflow:hidden;white-space:nowrap;padding-left:1px;margin-right:14px;flex:none;color:#222}
.cinp.off{color:#aaa}
.zoom{width:79px;font-size:16.500px}
.time{flex:1;margin:0;font-size:16.500px}
```
